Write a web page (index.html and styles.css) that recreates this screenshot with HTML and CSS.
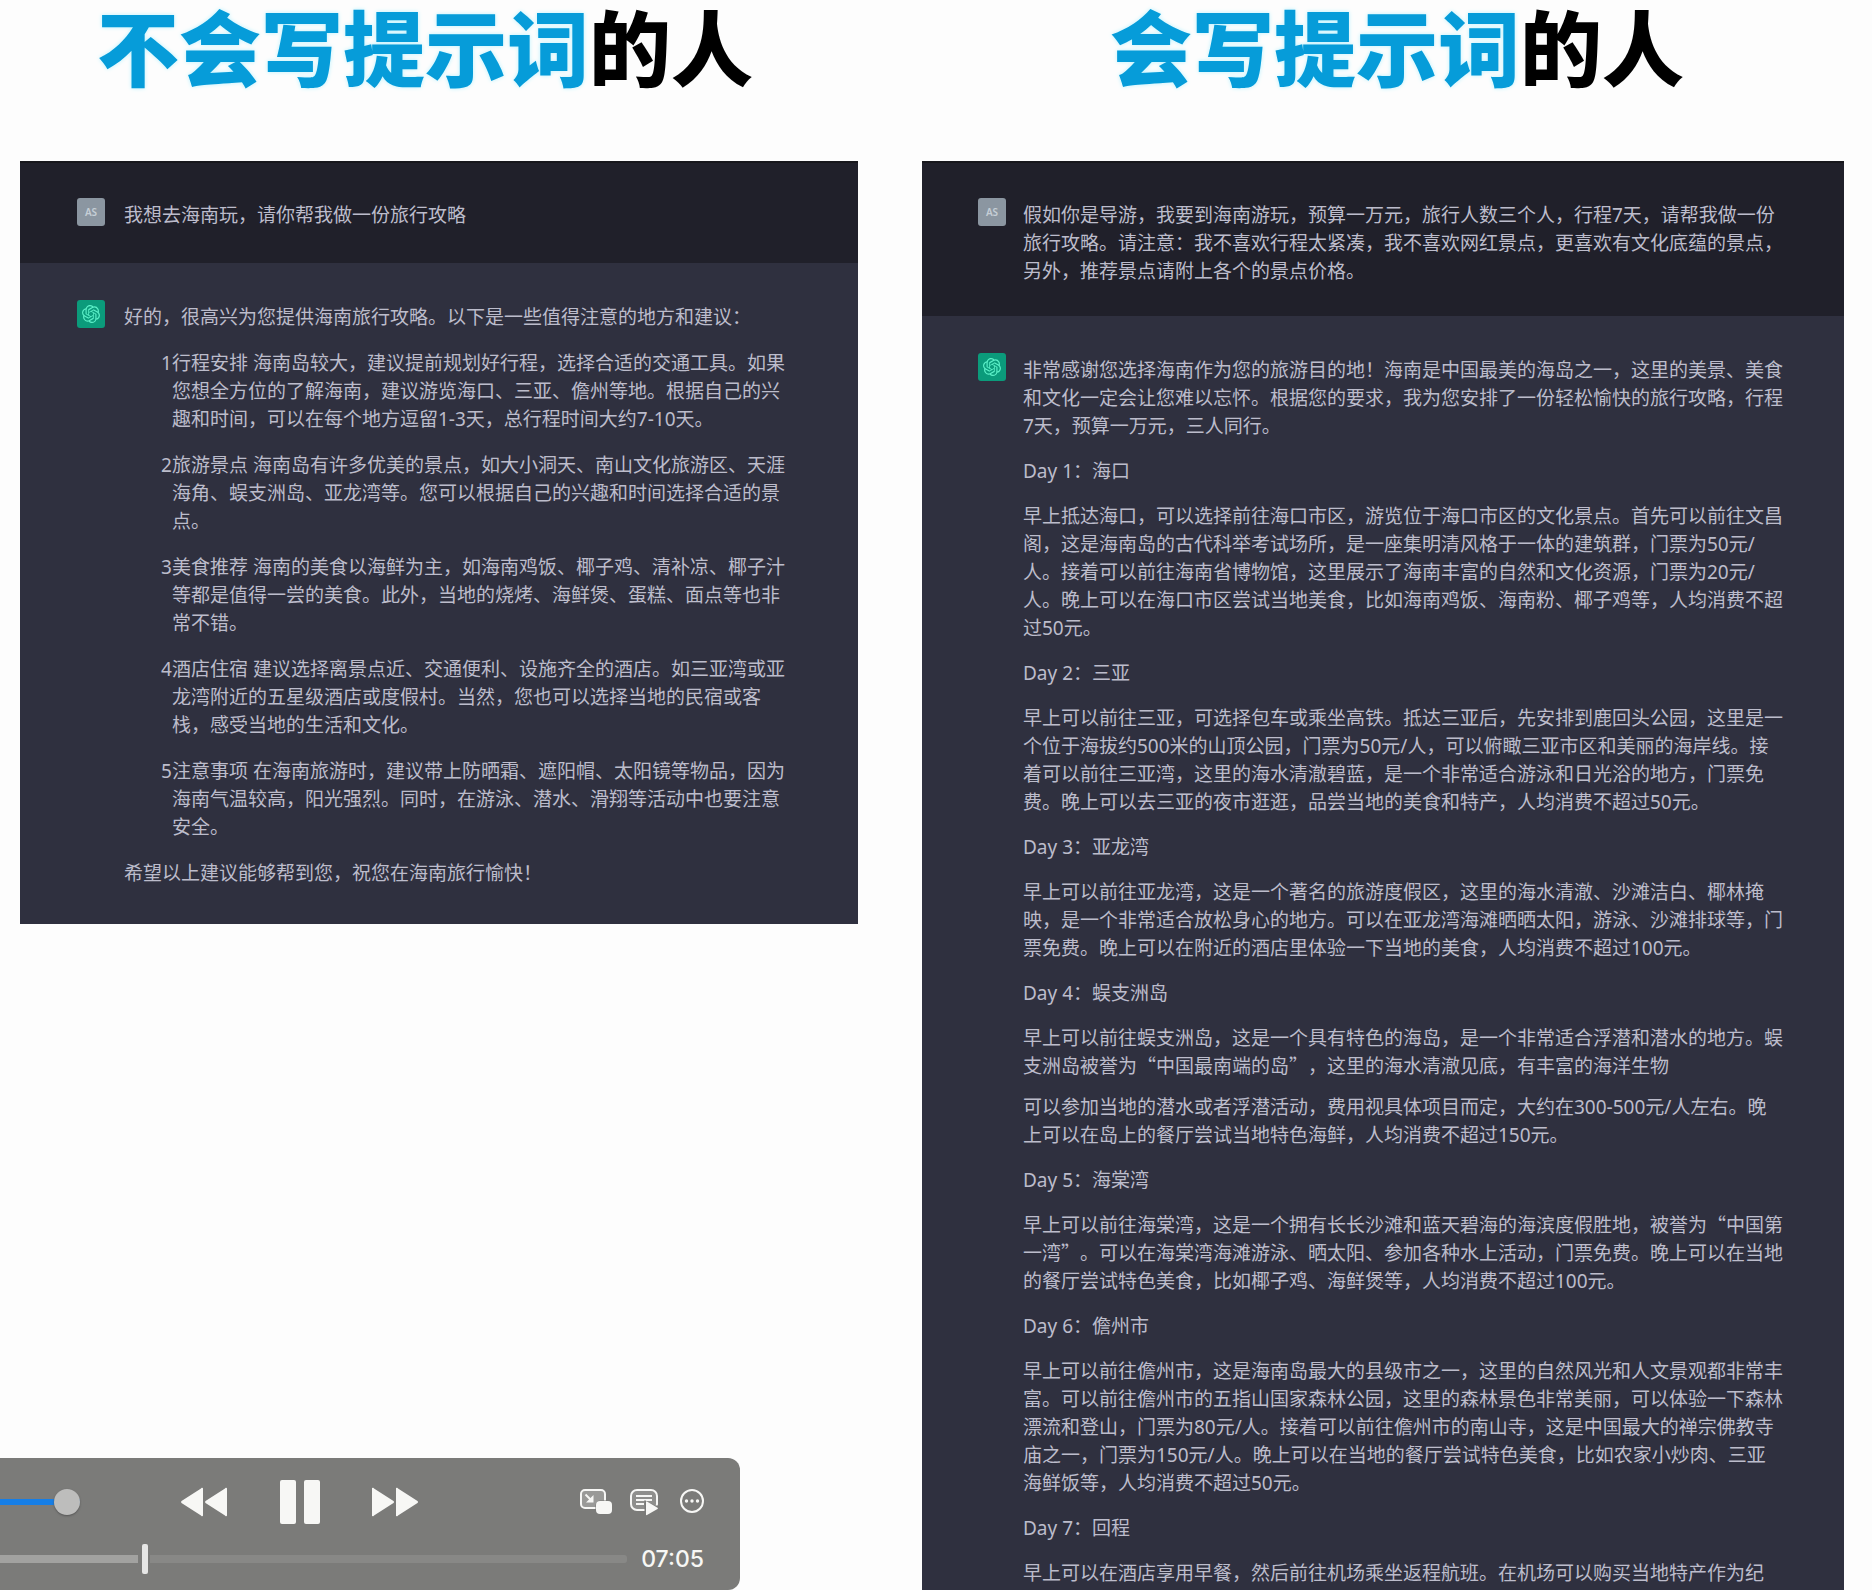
FILE: index.html
```html
<!DOCTYPE html>
<html lang="zh-CN">
<head>
<meta charset="utf-8">
<title>提示词对比</title>
<link rel="stylesheet" href="styles.css">
</head>
<body>
<svg class="defs" aria-hidden="true">
  <symbol id="knot" viewBox="0 0 24 24"><path d="M22.2819 9.8211a5.9847 5.9847 0 0 0-.5157-4.9108 6.0462 6.0462 0 0 0-6.5098-2.9A6.0651 6.0651 0 0 0 4.9807 4.1818a5.9847 5.9847 0 0 0-3.9977 2.9 6.0462 6.0462 0 0 0 .7427 7.0966 5.98 5.98 0 0 0 .511 4.9107 6.051 6.051 0 0 0 6.5146 2.9001A5.9847 5.9847 0 0 0 13.2599 24a6.0557 6.0557 0 0 0 5.7718-4.2058 5.9894 5.9894 0 0 0 3.9977-2.9001 6.0557 6.0557 0 0 0-.7475-7.0729zm-9.022 12.6081a4.4755 4.4755 0 0 1-2.8764-1.0408l.1419-.0804 4.7783-2.7582a.7948.7948 0 0 0 .3927-.6813v-6.7369l2.02 1.1686a.071.071 0 0 1 .038.052v5.5826a4.504 4.504 0 0 1-4.4945 4.4944zm-9.6607-4.1254a4.4708 4.4708 0 0 1-.5346-3.0137l.142.0852 4.783 2.7582a.7712.7712 0 0 0 .7806 0l5.8428-3.3685v2.3324a.0804.0804 0 0 1-.0332.0615L9.74 19.9502a4.4992 4.4992 0 0 1-6.1408-1.6464zM2.3408 7.8956a4.485 4.485 0 0 1 2.3655-1.9728V11.6a.7664.7664 0 0 0 .3879.6765l5.8144 3.3543-2.0201 1.1685a.0757.0757 0 0 1-.071 0l-4.8303-2.7865A4.504 4.504 0 0 1 2.3408 7.872zm16.5963 3.8558L13.1038 8.364 15.1192 7.2a.0757.0757 0 0 1 .071 0l4.8303 2.7913a4.4944 4.4944 0 0 1-.6765 8.1042v-5.6772a.79.79 0 0 0-.407-.667zm2.0107-3.0231l-.142-.0852-4.7735-2.7818a.7759.7759 0 0 0-.7854 0L9.409 9.2297V6.8974a.0662.0662 0 0 1 .0284-.0615l4.8303-2.7866a4.4992 4.4992 0 0 1 6.6802 4.66zM8.3065 12.863l-2.02-1.1638a.0804.0804 0 0 1-.038-.0567V6.0742a4.4992 4.4992 0 0 1 7.3757-3.4537l-.142.0805L8.704 5.459a.7948.7948 0 0 0-.3927.6813zm1.0976-2.3654l2.602-1.4998 2.6069 1.4998v2.9994l-2.5974 1.4997-2.6067-1.4997Z"/></symbol>
</svg>

<main class="compare">
  <section class="side side-basic">
    <h1 class="title"><span class="accent">不会写提示词</span>的人</h1>
    <div class="chat">
      <article class="message user">
        <span class="avatar">AS</span>
        <div class="text"><p>我想去海南玩，请你帮我做一份旅行攻略</p></div>
      </article>
      <article class="message bot">
        <span class="avatar"><svg class="logo"><use href="#knot"/></svg></span>
        <div class="text">
          <p>好的，很高兴为您提供海南旅行攻略。以下是一些值得注意的地方和建议<span class="colon">：</span></p>
          <ol class="tips">
            <li><span class="num">1</span><p>行程安排 海南岛较大，建议提前规划好行程，选择合适的交通工具。如果<br>您想全方位的了解海南，建议游览海口、三亚、儋州等地。根据自己的兴<br>趣和时间，可以在每个地方逗留1-3天，总行程时间大约7-10天。</p></li>
            <li><span class="num">2</span><p>旅游景点 海南岛有许多优美的景点，如大小洞天、南山文化旅游区、天涯<br>海角、蜈支洲岛、亚龙湾等。您可以根据自己的兴趣和时间选择合适的景<br>点。</p></li>
            <li><span class="num">3</span><p>美食推荐 海南的美食以海鲜为主，如海南鸡饭、椰子鸡、清补凉、椰子汁<br>等都是值得一尝的美食。此外，当地的烧烤、海鲜煲、蛋糕、面点等也非<br>常不错。</p></li>
            <li><span class="num">4</span><p>酒店住宿 建议选择离景点近、交通便利、设施齐全的酒店。如三亚湾或亚<br>龙湾附近的五星级酒店或度假村。当然，您也可以选择当地的民宿或客<br>栈，感受当地的生活和文化。</p></li>
            <li><span class="num">5</span><p>注意事项 在海南旅游时，建议带上防晒霜、遮阳帽、太阳镜等物品，因为<br>海南气温较高，阳光强烈。同时，在游泳、潜水、滑翔等活动中也要注意<br>安全。</p></li>
          </ol>
          <p>希望以上建议能够帮到您，祝您在海南旅行愉快！</p>
        </div>
      </article>
    </div>
  </section>

  <section class="side side-skilled">
    <h1 class="title"><span class="accent">会写提示词</span>的人</h1>
    <div class="chat">
      <article class="message user">
        <span class="avatar">AS</span>
        <div class="text"><p>假如你是导游，我要到海南游玩，预算一万元，旅行人数三个人，行程7天，请帮我做一份<br>旅行攻略。请注意<span class="colon">：</span>我不喜欢行程太紧凑，我不喜欢网红景点，更喜欢有文化底蕴的景点，<br>另外，推荐景点请附上各个的景点价格。</p></div>
      </article>
      <article class="message bot">
        <span class="avatar"><svg class="logo"><use href="#knot"/></svg></span>
        <div class="text">
          <p>非常感谢您选择海南作为您的旅游目的地！海南是中国最美的海岛之一，这里的美景、美食<br>和文化一定会让您难以忘怀。根据您的要求，我为您安排了一份轻松愉快的旅行攻略，行程<br>7天，预算一万元，三人同行。</p>
          <p>Day 1<span class="colon">：</span>海口</p>
          <p>早上抵达海口，可以选择前往海口市区，游览位于海口市区的文化景点。首先可以前往文昌<br>阁，这是海南岛的古代科举考试场所，是一座集明清风格于一体的建筑群，门票为50元/<br>人。接着可以前往海南省博物馆，这里展示了海南丰富的自然和文化资源，门票为20元/<br>人。晚上可以在海口市区尝试当地美食，比如海南鸡饭、海南粉、椰子鸡等，人均消费不超<br>过50元。</p>
          <p>Day 2<span class="colon">：</span>三亚</p>
          <p>早上可以前往三亚，可选择包车或乘坐高铁。抵达三亚后，先安排到鹿回头公园，这里是一<br>个位于海拔约500米的山顶公园，门票为50元/人，可以俯瞰三亚市区和美丽的海岸线。接<br>着可以前往三亚湾，这里的海水清澈碧蓝，是一个非常适合游泳和日光浴的地方，门票免<br>费。晚上可以去三亚的夜市逛逛，品尝当地的美食和特产，人均消费不超过50元。</p>
          <p>Day 3<span class="colon">：</span>亚龙湾</p>
          <p>早上可以前往亚龙湾，这是一个著名的旅游度假区，这里的海水清澈、沙滩洁白、椰林掩<br>映，是一个非常适合放松身心的地方。可以在亚龙湾海滩晒晒太阳，游泳、沙滩排球等，门<br>票免费。晚上可以在附近的酒店里体验一下当地的美食，人均消费不超过100元。</p>
          <p>Day 4<span class="colon">：</span>蜈支洲岛</p>
          <p>早上可以前往蜈支洲岛，这是一个具有特色的海岛，是一个非常适合浮潜和潜水的地方。蜈<br>支洲岛被誉为<span class="quote">“</span>中国最南端的岛<span class="quote">”</span>，这里的海水清澈见底，有丰富的海洋生物</p>
          <p class="continued">可以参加当地的潜水或者浮潜活动，费用视具体项目而定，大约在300-500元/人左右。晚<br>上可以在岛上的餐厅尝试当地特色海鲜，人均消费不超过150元。</p>
          <p>Day 5<span class="colon">：</span>海棠湾</p>
          <p>早上可以前往海棠湾，这是一个拥有长长沙滩和蓝天碧海的海滨度假胜地，被誉为<span class="quote">“</span>中国第<br>一湾<span class="quote">”</span>。可以在海棠湾海滩游泳、晒太阳、参加各种水上活动，门票免费。晚上可以在当地<br>的餐厅尝试特色美食，比如椰子鸡、海鲜煲等，人均消费不超过100元。</p>
          <p>Day 6<span class="colon">：</span>儋州市</p>
          <p>早上可以前往儋州市，这是海南岛最大的县级市之一，这里的自然风光和人文景观都非常丰<br>富。可以前往儋州市的五指山国家森林公园，这里的森林景色非常美丽，可以体验一下森林<br>漂流和登山，门票为80元/人。接着可以前往儋州市的南山寺，这是中国最大的禅宗佛教寺<br>庙之一，门票为150元/人。晚上可以在当地的餐厅尝试特色美食，比如农家小炒肉、三亚<br>海鲜饭等，人均消费不超过50元。</p>
          <p>Day 7<span class="colon">：</span>回程</p>
          <p>早上可以在酒店享用早餐，然后前往机场乘坐返程航班。在机场可以购买当地特产作为纪</p>
        </div>
      </article>
    </div>
  </section>
</main>

<div class="player">
  <div class="controls">
    <input class="volume" type="range" min="0" max="100" value="100" aria-label="音量">
    <div class="transport">
      <button type="button" aria-label="快退"><svg width="48" height="30" viewBox="0 0 48 30"><path d="M23 2v26a1 1 0 0 1-2 0.600L1.500 16q-1-1 0-2L21 1.400A1 1 0 0 1 23 2zM47 2v26a1 1 0 0 1-2 0.600L25.500 16q-1-1 0-2L45 1.400A1 1 0 0 1 47 2z"/></svg></button>
      <button type="button" aria-label="暂停"><svg width="40" height="44" viewBox="0 0 40 44"><rect width="16" height="44" rx="2"/><rect x="24" width="16" height="44" rx="2"/></svg></button>
      <button type="button" aria-label="快进"><svg width="48" height="30" viewBox="0 0 48 30"><path d="M0 2v26a1 1 0 0 0 2 0.600L21.500 16q1-1 0-2L2 1.400A1 1 0 0 0 0 2zM24 2v26a1 1 0 0 0 2 0.600L45.500 16q1-1 0-2L26 1.400A1 1 0 0 0 24 2z"/></svg></button>
    </div>
    <div class="extras">
      <button type="button" aria-label="画中画"><svg width="32" height="28" viewBox="0 0 32 28"><rect x="1" y="2" width="24" height="18" rx="4" fill="#9a9a98" stroke="#f7f7f5" stroke-width="2"/><path d="M5.500 6.500l6 6" fill="none" stroke="#f7f7f5" stroke-width="2"/><path d="M13.500 7v7.500H6z"/><rect x="15.500" y="12.500" width="17" height="14" rx="5" fill="#7b7b79"/><rect x="16" y="13" width="16" height="13" rx="4"/></svg></button>
      <button type="button" aria-label="播放列表"><svg width="32" height="28" viewBox="0 0 32 28"><rect x="1" y="2" width="26" height="20" rx="6" fill="#8f8f8d" stroke="#f7f7f5" stroke-width="2"/><path d="M6 8h16M6 12h16M6 16h8" fill="none" stroke="#f7f7f5" stroke-width="2"/><path d="M14.500 12v16H28.500V17.500H25z" fill="#7b7b79"/><path d="M16 14v12.500q0 1 1 .5l10.500-6q1-.6 0-1.200L17 13.500q-1-.5-1 .5z"/></svg></button>
      <button type="button" aria-label="更多"><svg width="24" height="28" viewBox="0 0 24 28"><circle cx="12" cy="13" r="11" fill="none" stroke="#f7f7f5" stroke-width="2"/><circle cx="6.500" cy="13" r="1.700"/><circle cx="12" cy="13" r="1.700"/><circle cx="17.500" cy="13" r="1.700"/></svg></button>
    </div>
  </div>
  <div class="timeline">
    <input class="seek" type="range" min="0" max="1000" value="229" aria-label="播放进度">
    <time class="clock">07:05</time>
  </div>
</div>
</body>
</html>
```
FILE: styles.css
```css
* {
  box-sizing: border-box;
}

body {
  margin: 0;
  background: #fdfdfd;
  font-family: "Noto Sans", "Noto Sans CJK SC", sans-serif;
}

h1,
p,
ol {
  margin: 0;
  padding: 0;
}

.defs {
  display: none;
}

.compare {
  display: grid;
  grid-template-columns: 838fr 922fr;
  gap: 64px;
  min-height: 100vh;
  padding: 0 28px 0 20px;
}

.side {
  display: flex;
  flex-direction: column;
  min-width: 0;
}

.title {
  margin-bottom: 71px;
  font-family: "Noto Sans CJK SC", sans-serif;
  font-size: 82px;
  font-weight: 900;
  line-height: 90px;
  text-align: center;
  white-space: nowrap;
  color: #000;
}

.side-basic .title {
  padding-right: 28px;
}

.side-skilled .title {
  padding-left: 28px;
}

.accent {
  color: #069cd9;
  text-shadow: 0 0 4px #b8f2ff;
}

.chat {
  display: flex;
  flex-direction: column;
  background: #2f303f;
  border-top: 2px solid #17171c;
}

.side-skilled .chat {
  flex: 1;
}

.message {
  display: flex;
  gap: 19px;
  padding: 38px 0 34px 57px;
  font-size: 19px;
  line-height: 28px;
  color: #bcbccb;
  white-space: nowrap;
  text-spacing-trim: space-all;
}

.message.user {
  background: #20202a;
}

.message.bot {
  padding-top: 40px;
  padding-bottom: 37px;
}

.side-skilled .message {
  gap: 17px;
  padding-left: 56px;
  padding-bottom: 31px;
}

.side-skilled .message.bot {
  padding-bottom: 0;
}

.avatar {
  display: flex;
  flex: none;
  align-items: center;
  justify-content: center;
  width: 28px;
  height: 28px;
  margin-top: -3px;
  border-radius: 3px;
  background: #8b96a1;
  color: #c5ced6;
  font-size: 10px;
  font-weight: 600;
}

.bot .avatar {
  background: #0b9b7b;
}

.logo {
  width: 18px;
  height: 18px;
  fill: #5cf0c8;
}

.text {
  display: flex;
  flex-direction: column;
  gap: 18px;
}

.side-skilled .text {
  gap: 17px;
}

.continued {
  margin-top: -4px;
}

.quote {
  font-family: "Noto Sans CJK SC", sans-serif;
  line-height: 1px;
}

/* the TC face centres the full-width colon in its cell */
.colon {
  font-family: "Noto Sans CJK TC", sans-serif;
  line-height: 1px;
}

.tips {
  display: flex;
  flex-direction: column;
  gap: 18px;
  padding-left: 37px;
  list-style: none;
}

.tips li {
  display: flex;
}

.num {
  width: 11px;
}

.player {
  position: fixed;
  left: 0;
  bottom: 0;
  width: 740px;
  padding: 14px 36px 11px 0;
  border-radius: 0 12px 12px 0;
  background: #7b7b79;
}

.controls {
  display: flex;
  align-items: center;
  height: 60px;
}

.transport {
  display: flex;
  align-items: center;
  gap: 52px;
  margin-left: 100px;
}

.extras {
  display: flex;
  align-items: center;
  gap: 18px;
  margin-left: auto;
}

button {
  display: block;
  padding: 0;
  border: 0;
  background: none;
}

button svg {
  display: block;
  fill: #f7f7f5;
}

input[type="range"] {
  display: block;
  margin: 0;
  appearance: none;
  background: none;
}

.volume {
  width: 80px;
  height: 28px;
}

.volume::-webkit-slider-runnable-track {
  height: 6px;
  background: #167ee6;
}

.volume::-webkit-slider-thumb {
  appearance: none;
  width: 26px;
  height: 26px;
  margin-top: -10px;
  border-radius: 50%;
  background: #bdbdbc;
  box-shadow: 0 1px 2px #555;
}

.timeline {
  display: flex;
  align-items: center;
  gap: 14px;
  height: 40px;
  margin-top: 7px;
}

.seek {
  flex: 1;
  min-width: 0;
  height: 30px;
}

.seek::-webkit-slider-runnable-track {
  height: 8px;
  border-radius: 0 3px 3px 0;
  background: linear-gradient(to right, #a2a2a0 22%, #7b7b79 22%, #7b7b79 24%, #888886 24%);
}

.seek::-webkit-slider-thumb {
  appearance: none;
  width: 6px;
  height: 30px;
  margin-top: -11px;
  border-radius: 2px;
  background: #e6e6e5;
}

.clock {
  color: #f7f7f5;
  font-family: Inter, sans-serif;
  font-size: 23px;
  font-weight: 500;
  line-height: 30px;
}
```
